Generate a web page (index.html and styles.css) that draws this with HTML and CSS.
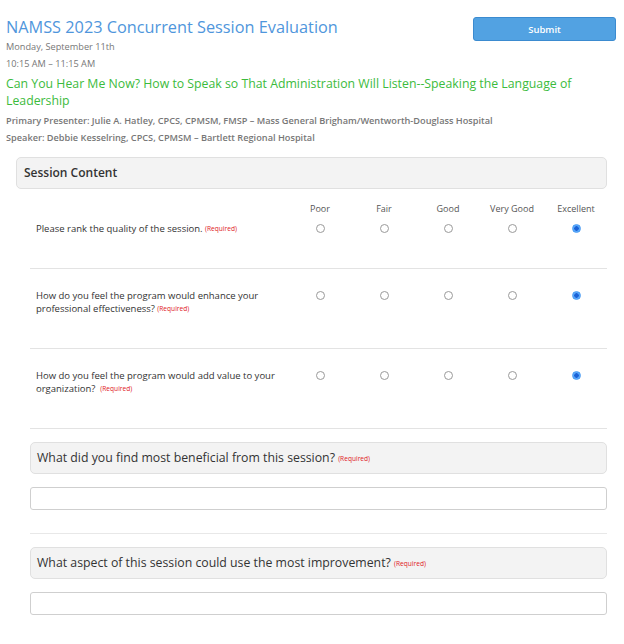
FILE: index.html
```html
<!DOCTYPE html>
<html>
<head>
<meta charset="utf-8">
<link rel="stylesheet" href="styles.css">
</head>
<body>
<div class="page">
  <header class="top">
    <div class="info">
      <h1 class="title">NAMSS 2023 Concurrent Session Evaluation</h1>
      <div class="meta">Monday, September 11th</div>
      <div class="meta">10:15 AM – 11:15 AM</div>
    </div>
    <button class="submit">Submit</button>
  </header>
  <h2 class="session-title">Can You Hear Me Now? How to Speak so That Administration Will Listen--Speaking the Language of Leadership</h2>
  <p class="presenter">Primary Presenter: Julie A. Hatley, CPCS, CPMSM, FMSP – Mass General Brigham/Wentworth-Douglass Hospital</p>
  <p class="presenter">Speaker: Debbie Kesselring, CPCS, CPMSM – Bartlett Regional Hospital</p>

  <section class="group">
    <div class="group-head">Session Content</div>
    <div class="matrix">
      <div class="mrow labels">
        <div class="q"></div>
        <div class="c">Poor</div>
        <div class="c">Fair</div>
        <div class="c">Good</div>
        <div class="c">Very Good</div>
        <div class="c">Excellent</div>
      </div>
      <div class="mrow item first">
        <div class="q">Please rank the quality of the session. <span class="req">(Required)</span></div>
        <div class="c"><span class="radio"></span></div>
        <div class="c"><span class="radio"></span></div>
        <div class="c"><span class="radio"></span></div>
        <div class="c"><span class="radio"></span></div>
        <div class="c"><span class="radio on"></span></div>
      </div>
      <div class="mrow item">
        <div class="q">How do you feel the program would enhance your professional effectiveness? <span class="req">(Required)</span></div>
        <div class="c"><span class="radio"></span></div>
        <div class="c"><span class="radio"></span></div>
        <div class="c"><span class="radio"></span></div>
        <div class="c"><span class="radio"></span></div>
        <div class="c"><span class="radio on"></span></div>
      </div>
      <div class="mrow item">
        <div class="q">How do you feel the program would add value to your organization? &nbsp;<span class="req">(Required)</span></div>
        <div class="c"><span class="radio"></span></div>
        <div class="c"><span class="radio"></span></div>
        <div class="c"><span class="radio"></span></div>
        <div class="c"><span class="radio"></span></div>
        <div class="c"><span class="radio on"></span></div>
      </div>
    </div>
  </section>

  <section class="open">
    <div class="open-head">What did you find most beneficial from this session? <span class="req">(Required)</span></div>
    <input class="field" type="text">
  </section>
  <section class="open">
    <div class="open-head">What aspect of this session could use the most improvement? <span class="req">(Required)</span></div>
    <input class="field" type="text">
  </section>
</div>
</body>
</html>
```
FILE: styles.css
```css
html, body {
  margin: 0;
  padding: 0;
  background: #fff;
}
body {
  font-family: "Open Sans", "Liberation Sans", sans-serif;
  color: #333;
}
.page {
  padding: 0 8px 0 6px;
}
.top {
  display: flex;
  justify-content: space-between;
  align-items: flex-start;
}
.title {
  margin: 16px 0 0;
  font-size: 16.3px;
  line-height: 22px;
  font-weight: 400;
  color: #4f96dc;
}
.meta {
  font-size: 9.2px;
  line-height: 17px;
  color: #777;
}
.submit {
  margin-top: 17px;
  width: 143px;
  height: 24px;
  background: #52a2e2;
  border: 1px solid #3b8bd0;
  border-radius: 3px;
  color: #fff;
  font-family: "Open Sans", "Liberation Sans", sans-serif;
  font-size: 9.5px;
  font-weight: 600;
  padding: 0;
}
.session-title {
  margin: 3px 0 0;
  font-size: 12.3px;
  line-height: 17px;
  font-weight: 400;
  color: #3cbb3c;
  max-width: 600px;
}
.presenter {
  margin: 0;
  font-size: 9.2px;
  line-height: 17px;
  font-weight: 600;
  color: #777;
}
.presenter:first-of-type {
  margin-top: 3px;
}
.group {
  margin: 11px 9px 0 10px;
}
.group-head {
  height: 30px;
  line-height: 30px;
  padding-left: 7px;
  background: #f3f3f3;
  border: 1px solid #e0e0e0;
  border-radius: 5px;
  font-size: 12px;
  font-weight: 600;
  color: #333;
}
.matrix {
  margin-left: 14px;
}
.mrow {
  display: grid;
  grid-template-columns: 258px repeat(5, 64px);
}
.labels {
  padding-top: 13px;
  font-size: 9px;
  line-height: 13px;
  color: #555;
}
.c {
  text-align: center;
}
.item {
  padding: 20px 0 33px;
  border-bottom: 1px solid #e3e3e3;
  font-size: 9.5px;
  line-height: 13px;
  color: #333;
}
.item.first {
  padding: 7px 0 33px;
}
.item .q {
  padding: 0 8px 0 6px;
  font-weight: 500;
}
.req {
  font-size: 6.6px;
  line-height: 1;
  color: #e0201e;
  font-weight: 400;
  vertical-align: 1px;
}
.radio {
  display: inline-block;
  box-sizing: border-box;
  width: 9px;
  height: 9px;
  margin-top: 2px;
  border: 1px solid #9a9a9a;
  border-radius: 50%;
  background: #fff;
  vertical-align: top;
}
.radio.on {
  border: 1px solid #4a9cf4;
  background: radial-gradient(circle, #1b62d6 0 2px, #5aa9fa 2.5px);
}
.open {
  margin: 0 9px 0 24px;
  padding: 13px 0 23px;
  border-bottom: 1px solid #e8e8e8;
}
.open:last-child {
  border-bottom: none;
}
.open-head {
  height: 30px;
  line-height: 30px;
  padding-left: 6px;
  background: #f3f3f3;
  border: 1px solid #e0e0e0;
  border-radius: 5px;
  font-size: 12.3px;
  color: #333;
}
.field {
  display: block;
  box-sizing: border-box;
  width: 100%;
  height: 23px;
  margin-top: 13px;
  border: 1px solid #cfcfcf;
  border-radius: 3px;
  background: #fff;
  padding: 0 6px;
}
```
